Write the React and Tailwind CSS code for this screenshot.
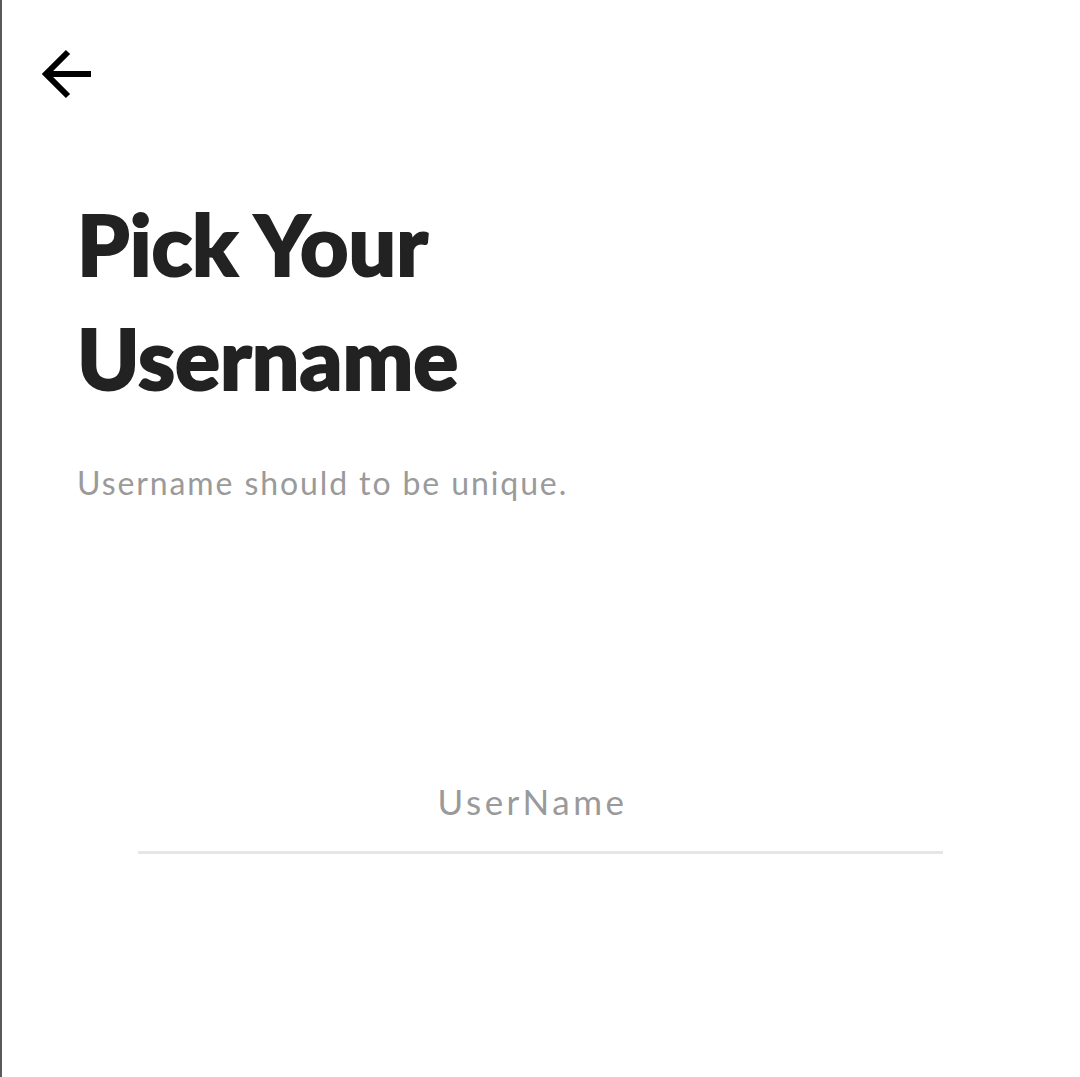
import { useState } from 'react'

function BackArrow() {
  return (
    <svg width="52" height="52" viewBox="0 0 52 52" fill="none">
      <path d="M4 25H50" stroke="#000" strokeWidth="6" />
      <path d="M27 3L5 25L27 47" stroke="#000" strokeWidth="6" strokeLinejoin="miter" />
    </svg>
  )
}

export default function App() {
  const [name, setName] = useState('')

  return (
    <div className="min-h-[1077px] w-[1080px] bg-white border-l-2 border-[#5a5a5a] font-['Lato',sans-serif]">
      <div className="pt-[49px] pl-[39px]">
        <button className="block">
          <BackArrow />
        </button>
      </div>

      <div className="pl-[75px] pt-[86px]">
        {/* heavier than Lato bold, so add a thin stroke */}
        <h1 className="text-[84px] leading-[114px] font-black text-[#222] [-webkit-text-stroke:2px_#222]">
          Pick Your
          <br />
          Username
        </h1>
        <p className="mt-[48px] text-[32px] text-[#9a9a9a] leading-[40px] tracking-[1.9px]">
          Username should to be unique.
        </p>
      </div>

      <div className="mt-[272px] w-[805px] ml-[136px]">
        <input
          value={name}
          onChange={(e) => setName(e.target.value)}
          placeholder="UserName"
          className="w-full text-center text-[35px] tracking-[3.5px] pr-[16px] text-[#333] placeholder:text-[#9a9a9a] pb-[23px] border-b-[3px] border-[#e6e6e6] outline-none bg-transparent"
        />
      </div>
    </div>
  )
}
